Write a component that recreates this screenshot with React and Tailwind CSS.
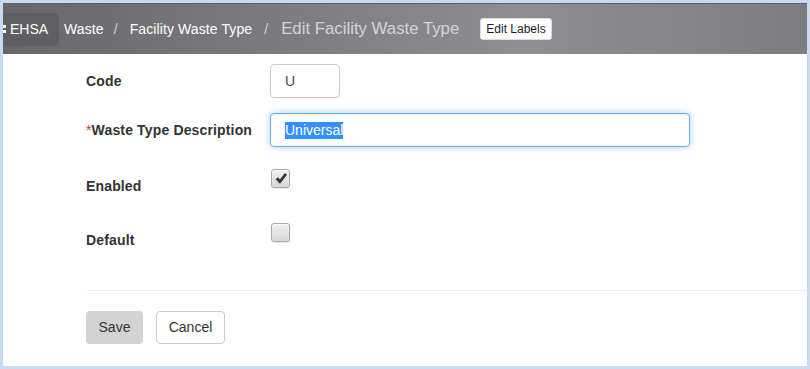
import React from 'react';

function CheckBox({ checked }) {
  return (
    <div className="w-[19px] h-[19px] ml-[1px] rounded-[3px] border border-[#a9a9a9] bg-linear-to-b from-[#f0f0f0] to-[#d8d8d8] shadow-[inset_0_1px_1px_rgba(255,255,255,0.8),0_1px_1px_rgba(0,0,0,0.1)] flex items-center justify-center">
      {checked && (
        <svg width="14" height="13" viewBox="0 0 14 13">
          <path d="M1.5 7.2 L4.2 5.2 L5.8 7.6 L11 1 L13 2.8 L6 11.8 Z" fill="#333" />
        </svg>
      )}
    </div>
  );
}

function Row({ label, required, children, className = '' }) {
  return (
    <div className={`flex ${className}`}>
      <div className="w-[184px] pt-[7px] leading-[20px] text-[14px] font-bold tracking-[0.15px] text-[#333]">
        {required && <span className="text-[#e0303a] font-normal">*</span>}
        {label}
      </div>
      <div>{children}</div>
    </div>
  );
}

export default function App() {
  return (
    <div
      className="w-[810px] h-[369px] border-[3px] border-[#c6dbf3] bg-white flex flex-col overflow-hidden"
      style={{ fontFamily: '"Liberation Sans", Arial, sans-serif' }}
    >
      {/* Header */}
      <div className="h-[51px] shrink-0 flex items-center bg-linear-to-r from-[#67676b] via-[#8f8f93] via-65% to-[#7d7d81] border-t border-[#5f5f63]">
        <div className="h-[33px] w-[56px] flex items-center bg-[#5f5f63] rounded-r-[5px]">
          <div className="w-[3px] flex flex-col gap-[2px]">
            <div className="h-[3px] bg-white"></div>
            <div className="h-[3px] bg-white"></div>
          </div>
          <span className="ml-[4px] text-[14px] text-white">EHSA</span>
        </div>
        <div className="ml-[5px] flex items-center text-[14px] tracking-[0.1px] text-white">
          <span>Waste</span>
          <span className="ml-[10px] mr-[12px] text-[#d2d2d2]">/</span>
          <span>Facility Waste Type</span>
          <span className="ml-[12px] mr-[13px] text-[#d2d2d2]">/</span>
          <span className="text-[16.8px] tracking-normal text-[#d4d4d4]">Edit Facility Waste Type</span>
          <button className="ml-[21px] h-[22px] px-[5px] bg-white rounded-[3px] border border-[#ddd] text-[12px] tracking-normal text-[#222] leading-[18px]">
            Edit Labels
          </button>
        </div>
      </div>

      {/* Form */}
      <div className="pl-[83px] pt-[10px] flex flex-col">
        <Row label="Code">
          <div className="w-[70px] h-[34px] border border-[#ccc] rounded-[4px] px-[14px] flex items-center text-[14px] text-[#3a4670]">
            U
          </div>
        </Row>
        <Row label="Waste Type Description" required className="mt-[15px]">
          <div className="w-[420px] h-[34px] border border-[#66afe9] rounded-[4px] px-[14px] flex items-center text-[14px] shadow-[inset_0_1px_1px_rgba(0,0,0,0.075),0_0_6px_rgba(102,175,233,0.6)]">
            <span className="bg-[#3390ff] text-white leading-[17px]">Universal</span>
          </div>
        </Row>
        <Row label="Enabled" className="mt-[22px]">
          <CheckBox checked />
        </Row>
        <Row label="Default" className="mt-[27px]">
          <CheckBox />
        </Row>

        <div className="mt-[40px] h-px bg-[#eeeeee]"></div>

        <div className="mt-[20px] flex gap-[13px]">
          <button className="w-[57px] h-[33px] rounded-[4px] bg-[#d3d3d3] text-[14px] text-[#333]">Save</button>
          <button className="w-[69px] h-[33px] rounded-[4px] bg-white border border-[#ccc] text-[14px] text-[#333]">Cancel</button>
        </div>
      </div>
    </div>
  );
}
